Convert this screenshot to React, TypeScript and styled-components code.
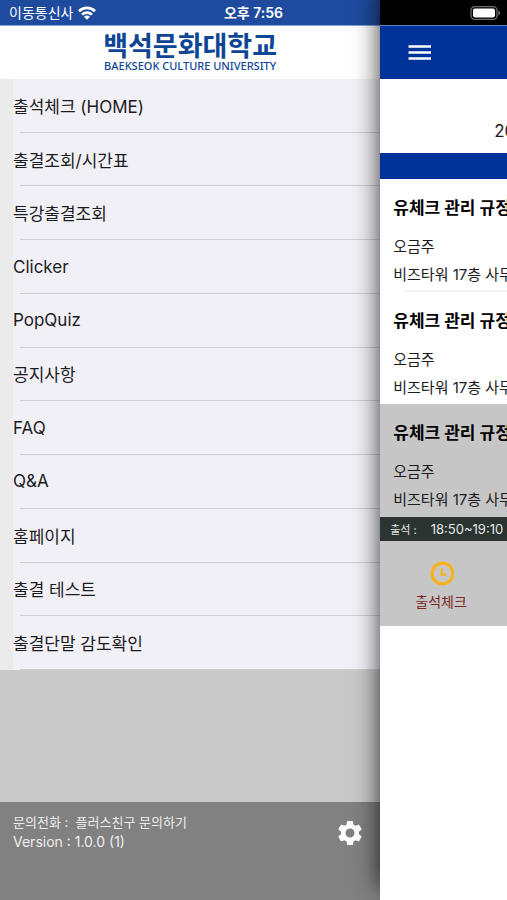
import React from "react";
import styled, { createGlobalStyle } from "styled-components";
import { MdSettings } from "react-icons/md";

const GlobalStyle = createGlobalStyle`
  *, *::before, *::after { box-sizing: border-box; }
  html, body, #root { height: 100%; }
  body {
    margin: 0;
    background: #fff;
    color: #1c1c1e;
    font-family: Inter, "Noto Sans CJK KR", sans-serif;
  }
  button { font: inherit; color: inherit; background: none; border: 0; padding: 0; cursor: pointer; }
  a { color: inherit; text-decoration: none; }
  h1, h2, p, ul { margin: 0; padding: 0; }
  ul { list-style: none; }
`;

const Screen = styled.div`
  display: grid;
  grid-template-columns: 3fr 1fr;
  min-height: 100vh;
  overflow: hidden;
`;

const Drawer = styled.aside`
  display: flex;
  flex-direction: column;
  min-width: 0;
  background: #c9c9c9;
`;

const DrawerStatus = styled.div`
  display: grid;
  grid-template-columns: 1fr 2fr;
  align-items: center;
  height: 26px;
  background: #1f4b9f;
  border-bottom: 1px solid #7fa3dc;
  color: #fff;
  line-height: 24px;
`;

const Carrier = styled.span`
  display: flex;
  align-items: center;
  gap: 5px;
  padding-left: 9px;
  font-size: 14px;
  white-space: nowrap;
`;

const Clock = styled.time`
  justify-self: center;
  font-size: 14px;
  font-weight: 600;
`;

const Brand = styled.header`
  display: flex;
  flex-direction: column;
  align-items: center;
  height: 53px;
  padding-top: 4px;
  background: #fff;
  color: #0f4595;
`;

const BrandName = styled.h1`
  font-family: "Noto Sans CJK KR", sans-serif;
  font-size: 27px;
  font-weight: 700;
  line-height: 30px;
  white-space: nowrap;
`;

const BrandLatin = styled.p`
  font-family: "Noto Sans", sans-serif;
  font-size: 11px;
  font-weight: 500;
  line-height: 12px;
  white-space: nowrap;
`;

const Menu = styled.ul`
  display: grid;
  grid-auto-rows: 1fr;
  min-height: 591px;
  padding-left: 13px;
  background: linear-gradient(to right, #ebebeb 13px, #f1f0f6 13px);
`;

const MenuItem = styled.li`
  display: flex;
  flex-direction: column;

  &::after {
    content: "";
    height: 1px;
    margin-left: 7px;
    background: #cfced4;
  }
`;

const MenuLink = styled.a`
  flex: 1;
  display: flex;
  align-items: center;
  font-size: 17px;
  white-space: nowrap;
`;

const DrawerFooter = styled.footer`
  display: flex;
  justify-content: space-between;
  align-items: flex-start;
  height: 98px;
  margin-top: auto;
  padding: 10px 15px 0 13px;
  background: #818181;
  color: #ededed;
  line-height: 20px;
`;

const Contact = styled.p`
  font-size: 13px;
`;

const Version = styled.p`
  font-size: 14px;
`;

const SettingsButton = styled.button`
  display: flex;
  margin-top: 6px;
  color: #fff;
`;

const PagePanel = styled.div`
  position: relative;
  z-index: 1;
  display: grid;
  min-width: 0;
  background: #fff;
  box-shadow: 0 -12px 24px rgba(0, 0, 0, 0.8);
`;

const Page = styled.main`
  min-width: 0;
  overflow-x: clip;
  background: #fff;
  white-space: nowrap;
`;

const PageStatus = styled.div`
  display: flex;
  justify-content: flex-end;
  align-items: center;
  height: 26px;
  padding-right: 6px;
  background: #000;
  border-bottom: 1px solid #5b84cc;
`;

const PageBar = styled.header`
  display: flex;
  align-items: center;
  height: 53px;
  padding-left: 27px;
  background: #003399;
`;

const IconButton = styled.button`
  display: flex;
`;

const DateLine = styled.p`
  height: 74px;
  padding: 40px 0 0 114px;
  font-size: 17px;
  line-height: 24px;
`;

const Band = styled.div`
  height: 26px;
  background: #003399;
`;

const Lectures = styled.ul`
  display: grid;
  grid-auto-rows: 1fr;
  min-height: 338px;
`;

const Lecture = styled.li<{ $active?: boolean }>`
  display: flex;
  flex-direction: column;
  padding: 15px 0 0 13px;
  background: ${(p) => (p.$active ? "#c6c6c6" : "#fff")};
  font-size: 15px;
  line-height: 28px;

  &:first-child::after {
    content: "";
    height: 2px;
    margin: auto 0 0 12px;
    background: #f4f4f4;
  }
`;

const LectureTitle = styled.h2`
  margin-bottom: 11px;
  color: #000;
  font-size: 17px;
  font-weight: 700;
  line-height: 28px;
`;

const Period = styled.p`
  display: flex;
  align-items: center;
  gap: 14px;
  height: 24px;
  padding-left: 10px;
  background: #2b3431;
  color: #e6e6e6;
  font-size: 13px;
`;

const PeriodLabel = styled.span`
  font-size: 11px;
`;

const Actions = styled.div`
  display: flex;
  height: 85px;
  padding: 20px 0 0 35px;
  align-items: flex-start;
  background: #c6c6c6;
`;

const CheckButton = styled.button`
  display: flex;
  flex-direction: column;
  align-items: center;
  gap: 4px;
  color: #7c2529;
  font-size: 14px;
  line-height: 22px;
`;

const menu = [
  "출석체크 (HOME)",
  "출결조회/시간표",
  "특강출결조회",
  "Clicker",
  "PopQuiz",
  "공지사항",
  "FAQ",
  "Q&A",
  "홈페이지",
  "출결 테스트",
  "출결단말 감도확인",
];

const lectures = [
  { id: 1, active: false },
  { id: 2, active: false },
  { id: 3, active: true },
];

const WifiIcon = () => (
  <svg width="18" height="14" viewBox="0 0 18 14" aria-hidden="true">
    <g fill="none" stroke="#fff" strokeWidth="2.7">
      <path d="M1 5.2a11.4 11.4 0 0 1 16 0" />
      <path d="M4 8.6a7.1 7.1 0 0 1 10 0" />
    </g>
    <path d="M9 13.8 6 10.8a4.4 4.4 0 0 1 6 0Z" fill="#fff" />
  </svg>
);

const BatteryIcon = () => (
  <svg width="31" height="14" viewBox="0 0 31 14" role="img" aria-label="배터리">
    <rect x="1" y="0.7" width="26" height="12.6" rx="3.6" fill="none" stroke="#6b6b6b" strokeWidth="1.3" />
    <rect x="3" y="2.6" width="22" height="8.8" rx="1.8" fill="#fff" />
    <path d="M28.4 4.6q2 .7 2 2.4t-2 2.4Z" fill="#6b6b6b" />
  </svg>
);

const HamburgerIcon = () => (
  <svg width="25" height="18" viewBox="0 0 25 18" aria-hidden="true">
    <path d="M1.5 2.5h22.5M1.5 8.5h22.5M1.5 14.5h22.5" stroke="#fff" strokeWidth="2.6" />
  </svg>
);

const ClockIcon = () => (
  <svg width="26" height="26" viewBox="0 0 26 26" aria-hidden="true">
    <circle cx="14.5" cy="12.5" r="10.4" fill="none" stroke="#f7b31d" strokeWidth="3.2" />
    <path d="M13.6 7.5v6.2h4.6" fill="none" stroke="#f7b31d" strokeWidth="2.2" />
  </svg>
);

export default function App() {
  return (
    <>
      <GlobalStyle />
      <Screen>
        <Drawer>
          <DrawerStatus>
            <Carrier>
              이동통신사
              <WifiIcon />
            </Carrier>
            <Clock>오후 7:56</Clock>
          </DrawerStatus>
          <Brand>
            <BrandName>백석문화대학교</BrandName>
            <BrandLatin>BAEKSEOK CULTURE UNIVERSITY</BrandLatin>
          </Brand>
          <nav>
            <Menu>
              {menu.map((label) => (
                <MenuItem key={label}>
                  <MenuLink href="#">{label}</MenuLink>
                </MenuItem>
              ))}
            </Menu>
          </nav>
          <DrawerFooter>
            <div>
              <Contact>문의전화 :&nbsp; 플러스친구 문의하기</Contact>
              <Version>Version : 1.0.0 (1)</Version>
            </div>
            <SettingsButton aria-label="설정">
              <MdSettings size={30} />
            </SettingsButton>
          </DrawerFooter>
        </Drawer>
        <PagePanel>
          <Page>
            <PageStatus>
              <BatteryIcon />
            </PageStatus>
            <PageBar>
              <IconButton aria-label="메뉴">
                <HamburgerIcon />
              </IconButton>
            </PageBar>
            <DateLine>20</DateLine>
            <Band />
            <Lectures>
              {lectures.map((l) => (
                <Lecture key={l.id} $active={l.active}>
                  <LectureTitle>유체크 관리 규정</LectureTitle>
                  <p>오금주</p>
                  <p>비즈타워 17층 사무</p>
                </Lecture>
              ))}
            </Lectures>
            <Period>
              <PeriodLabel>출석 :</PeriodLabel>
              <time>18:50~19:10</time>
            </Period>
            <Actions>
              <CheckButton>
                <ClockIcon />
                출석체크
              </CheckButton>
            </Actions>
          </Page>
        </PagePanel>
      </Screen>
    </>
  );
}
